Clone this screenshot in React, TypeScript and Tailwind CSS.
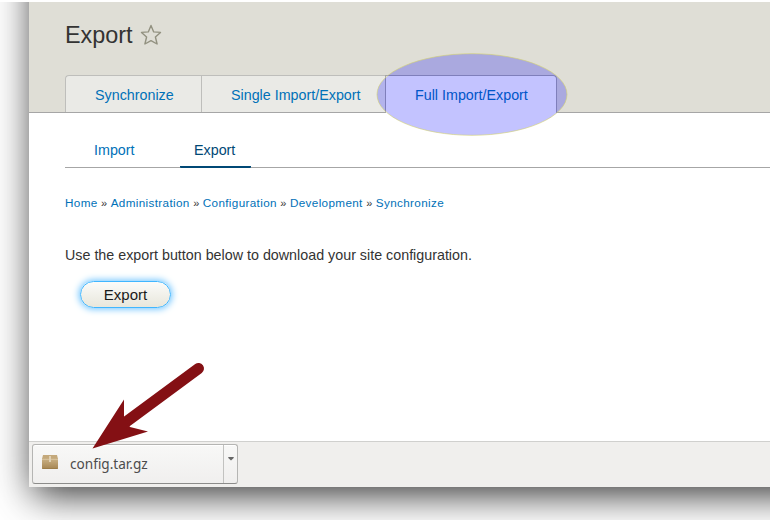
import React from "react";

const crumbs = ["Home", "Administration", "Configuration", "Development", "Synchronize"];

function Star() {
  return (
    <svg className="mb-[2px] ml-[7px] h-[22px] w-[22px]" viewBox="0 0 22 22" fill="none" stroke="#929180" strokeWidth="1.4" strokeLinejoin="round">
      <path d="M11 1.4 L13.7 7.9 L20.5 8.4 L15.4 13 L17.1 20 L11 16.6 L4.9 20 L6.6 13 L1.5 8.4 L8.3 7.9 Z" />
    </svg>
  );
}

function PackageIcon() {
  return (
    <svg className="mb-[4px] ml-[8px] h-[16px] w-[18px] shrink-0" viewBox="0 0 18 16">
      <defs>
        <linearGradient id="box" x1="0" y1="0" x2="0" y2="1">
          <stop offset="0" stopColor="#cbb286" />
          <stop offset="1" stopColor="#a58552" />
        </linearGradient>
      </defs>
      <path d="M2 1 H16 L17 5 H1 Z" fill="#c4a97b" />
      <rect x="1" y="4.5" width="16" height="10.5" rx="0.7" fill="url(#box)" />
      <path d="M1 5.5 H17" stroke="#d6c09a" strokeWidth="1" />
      <path d="M1.5 14.5 H16.5" stroke="#9c7d49" strokeWidth="1" />
      <rect x="8" y="2" width="2" height="6" fill="#dfcfb2" />
    </svg>
  );
}

export default function App() {
  return (
    <div className="h-[520px] w-[770px] overflow-hidden bg-white pt-[2px] font-['Liberation_Sans',Arial,sans-serif] text-[14.3px] text-[#333]">
      <div className="relative h-[518px] overflow-hidden">
        <div className="-mt-[80px] -mr-[80px] ml-[29px] h-[565px] bg-white pt-[80px] shadow-[4px_8px_36px_rgba(0,0,0,0.8)]">
          <div className="flex h-[485px] flex-col">
            <header className="flex h-[111px] flex-col justify-between border-b border-[#a6a6a6] bg-[#dfded6] pl-[36px]">
              <div className="flex h-[68px] items-center text-[23.4px]">
                <h1>Export</h1>
                <Star />
              </div>
              <nav className="flex h-[37px] text-[#0071b8]">
                <a className="flex w-[136px] items-center rounded-tl-[4px] border-t border-l border-[#bebebb] bg-[#eaeae6] pt-[4px] pl-[29px]">Synchronize</a>
                <a className="flex w-[184px] items-center border-t border-l border-[#bebebb] bg-[#eaeae6] pt-[4px] pl-[29px]">Single Import/Export</a>
                <a className="-mb-px flex h-[38px] w-[172px] items-center rounded-tr-[4px] border-x border-t border-[#a6a6a6] bg-white pt-[3px] pl-[29px]">Full Import/Export</a>
              </nav>
            </header>
            <main className="flex-1 pl-[36px]">
              <nav className="mt-[20px] flex h-[35px] border-b border-[#a6a6a6]">
                <a className="w-[115px] pt-[7px] pl-[29px] text-[#0071b8]">Import</a>
                <a className="h-[35px] w-[71px] rounded-b-[1px] border-b-2 border-[#004875] pt-[7px] pl-[14px] text-[#004875]">Export</a>
              </nav>
              <div className="mt-[27px] flex h-[16px] items-center gap-[3.5px] text-[11.7px] tracking-[0.35px]">
                {crumbs.map((c, i) => (
                  <React.Fragment key={c}>
                    {i > 0 && <span className="text-[11px] tracking-normal">»</span>}
                    <a className="text-[#0071b8]">{c}</a>
                  </React.Fragment>
                ))}
              </div>
              <p className="mt-[33px] h-[22px] leading-[22px]">Use the export button below to download your site configuration.</p>
              <button className="mt-[15px] ml-[15px] flex h-[27px] w-[91px] items-center justify-center rounded-full border border-[#40b6ff] bg-linear-to-b from-[#fbfbf9] to-[#e8e7dc] pt-px text-[15px] text-[#1a1a1a] shadow-[0_0_7px_1px_#69c2ff]">Export</button>
            </main>
            <footer className="flex h-[46px] border-t border-[#d0d0ce] bg-[#f0efed] pt-[2px] pl-[3px]">
              <div className="flex h-[40px] w-[206px] rounded-[3px] border border-[#b5b5b3] border-b-[#8c8c8a] bg-linear-to-b from-[#f8f8f7] to-[#f0efee] shadow-[inset_0_1px_0_white]">
                <div className="flex w-[190px] items-center">
                  <PackageIcon />
                  <span className="ml-[11px] font-['Noto_Sans',sans-serif] text-[13.6px] text-[#4c4c4c]">config.tar.gz</span>
                </div>
                <div className="flex flex-1 justify-center border-l border-[#c2c2c0] pt-[12px]">
                  <svg className="h-[4px] w-[6px]" viewBox="0 0 6 4"><path d="M0.3 0H5.7V1L3 3.5L0.3 1Z" fill="#666" /></svg>
                </div>
              </div>
            </footer>
          </div>
        </div>
      </div>
      <svg className="pointer-events-none absolute top-0 left-0" width="770" height="520" viewBox="0 0 770 520">
        <ellipse cx="472" cy="94.5" rx="95" ry="40.8" fill="#0000ff" fillOpacity="0.235" stroke="#d2d06e" strokeOpacity="0.6" strokeWidth="1" />
        <path d="M198.5 368.5 L126 422" stroke="#841014" strokeWidth="11" strokeLinecap="round" />
        <path d="M92.5 448.5 L124 399.5 V418 L130 427 L148 431.5 Z" fill="#841014" />
      </svg>
    </div>
  );
}
